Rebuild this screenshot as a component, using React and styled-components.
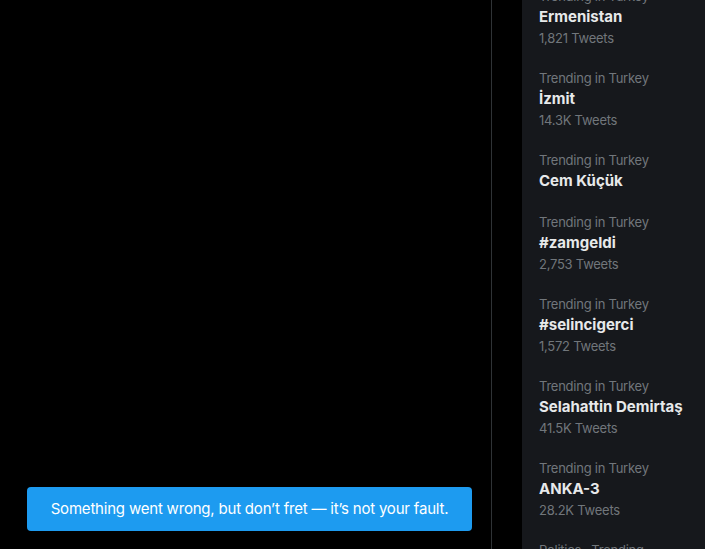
import React from "react";
import styled, { createGlobalStyle } from "styled-components";

const Global = createGlobalStyle`
  html, body { margin: 0; padding: 0; background: #000; }
  body { font-family: "Inter", "Noto Sans", sans-serif; -webkit-font-smoothing: antialiased; }
`;

const Page = styled.div`
  display: flex;
  width: 705px;
  height: 549px;
  overflow: hidden;
  background: #000;
  position: relative;
`;

const Main = styled.main`
  flex: 0 0 491px;
  border-right: 1px solid #2f3336;
  height: 549px;
`;

const Sidebar = styled.aside`
  flex: 0 0 350px;
  padding-left: 30px;
`;

const Panel = styled.section`
  background: #16181c;
  border-radius: 16px;
  margin-top: -24px;
`;

const Trend = styled.div`
  display: flex;
  flex-direction: column;
  padding: 12px 16px ${(p) => (p.$noCount ? "11px" : "12px")} 17px;
`;

const Label = styled.span`
  font-size: 13px;
  line-height: 16px;
  letter-spacing: -0.25px;
  color: #71767b;
  white-space: nowrap;
`;

const Title = styled.span`
  font-size: 15px;
  line-height: 20px;
  font-weight: 700;
  color: #e7e9ea;
  padding-top: 3px;
  white-space: nowrap;
`;

const Count = styled.span`
  font-size: 13px;
  line-height: 16px;
  letter-spacing: -0.25px;
  color: #71767b;
  margin-top: 3px;
  white-space: nowrap;
`;

const Toast = styled.div`
  position: absolute;
  left: 27px;
  bottom: 18px;
  width: 445px;
  height: 44px;
  box-sizing: border-box;
  border-radius: 4px;
  background: #1d9bf0;
  color: #fff;
  font-size: 15px;
  line-height: 20px;
  letter-spacing: -0.2px;
  display: flex;
  align-items: center;
  justify-content: center;
  white-space: nowrap;
`;

const trends = [
  { label: "Trending in Turkey", title: "Ermenistan", count: "1,821 Tweets" },
  { label: "Trending in Turkey", title: "İzmit", count: "14.3K Tweets" },
  { label: "Trending in Turkey", title: "Cem Küçük" },
  { label: "Trending in Turkey", title: "#zamgeldi", count: "2,753 Tweets" },
  { label: "Trending in Turkey", title: "#selincigerci", count: "1,572 Tweets" },
  { label: "Trending in Turkey", title: "Selahattin Demirtaş", count: "41.5K Tweets" },
  { label: "Trending in Turkey", title: "ANKA-3", count: "28.2K Tweets" },
  { label: "Politics · Trending", title: "Kılıçdaroğlu", count: "12.1K Tweets" },
];

export default function App() {
  return (
    <Page>
      <Global />
      <Main />
      <Sidebar>
        <Panel>
          {trends.map((t, i) => (
            <Trend key={i} $noCount={!t.count}>
              <Label>{t.label}</Label>
              <Title>{t.title}</Title>
              {t.count && <Count>{t.count}</Count>}
            </Trend>
          ))}
        </Panel>
      </Sidebar>
      <Toast>Something went wrong, but don’t fret — it’s not your fault.</Toast>
    </Page>
  );
}
